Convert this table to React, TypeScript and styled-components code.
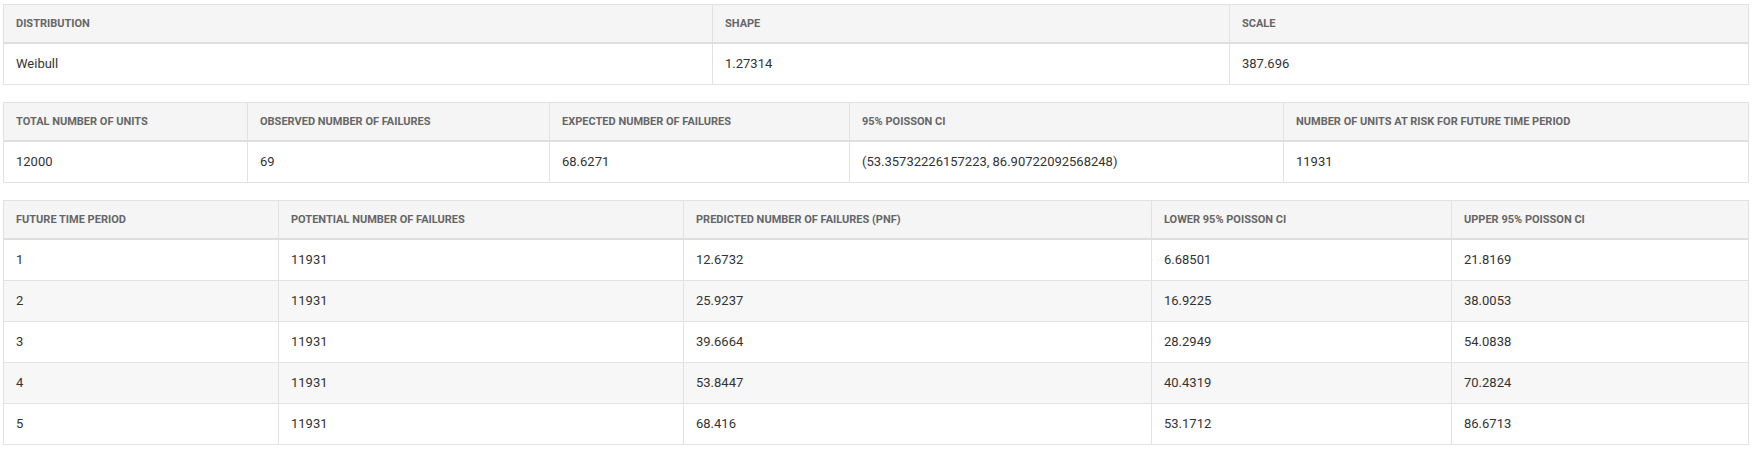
import React, { FC } from 'react';
import styled, { createGlobalStyle } from 'styled-components';

type Column = { title: string; width: number };
type TableProps = { columns: Column[]; rows: (string | number)[][] };

const GlobalStyle = createGlobalStyle`
  html, body {
    margin: 0;
    padding: 0;
    background: #fff;
  }
  body {
    font-family: Roboto, "Liberation Sans", Arial, sans-serif;
  }
`;

const distribution: TableProps = {
  columns: [
    { title: 'Distribution', width: 709 },
    { title: 'Shape', width: 517 },
    { title: 'Scale', width: 519 },
  ],
  rows: [['Weibull', '1.27314', '387.696']],
};

const summary: TableProps = {
  columns: [
    { title: 'Total number of units', width: 244 },
    { title: 'Observed number of failures', width: 302 },
    { title: 'Expected number of failures', width: 300 },
    { title: '95% Poisson CI', width: 434 },
    { title: 'Number of units at risk for future time period', width: 465 },
  ],
  rows: [['12000', '69', '68.6271', '(53.35732226157223, 86.90722092568248)', '11931']],
};

const forecast: TableProps = {
  columns: [
    { title: 'Future time period', width: 275 },
    { title: 'Potential number of failures', width: 405 },
    { title: 'Predicted number of failures (PNF)', width: 468 },
    { title: 'Lower 95% Poisson CI', width: 300 },
    { title: 'Upper 95% Poisson CI', width: 297 },
  ],
  rows: [
    [1, 11931, '12.6732', '6.68501', '21.8169'],
    [2, 11931, '25.9237', '16.9225', '38.0053'],
    [3, 11931, '39.6664', '28.2949', '54.0838'],
    [4, 11931, '53.8447', '40.4319', '70.2824'],
    [5, 11931, '68.416', '53.1712', '86.6713'],
  ],
};

const DataTable: FC<TableProps> = ({ columns, rows }) => (
  <Table>
    <colgroup>
      {columns.map((c) => (
        <col key={c.title} style={{ width: c.width }} />
      ))}
    </colgroup>
    <thead>
      <tr>
        {columns.map((c) => (
          <Th key={c.title}>{c.title}</Th>
        ))}
      </tr>
    </thead>
    <tbody>
      {rows.map((row, i) => (
        <Row key={i} striped={i % 2 === 1}>
          {row.map((cell, j) => (
            <Td key={j}>{cell}</Td>
          ))}
        </Row>
      ))}
    </tbody>
  </Table>
);

const App: FC = () => (
  <>
    <GlobalStyle />
    <Page>
      <DataTable {...distribution} />
      <DataTable {...summary} />
      <DataTable {...forecast} />
    </Page>
  </>
);

const Page = styled.div`
  display: flex;
  flex-direction: column;
  gap: 17px;
  width: 1745px;
  padding: 4px 0 0 3px;
`;

const Table = styled.table`
  width: 100%;
  table-layout: fixed;
  border-collapse: collapse;
  border: 1px solid #e2e2e2;
`;

const Th = styled.th`
  padding: 12px 12px 11px;
  height: 38px;
  box-sizing: border-box;
  text-align: left;
  vertical-align: middle;
  background: #f5f5f5;
  border: 1px solid #e2e2e2;
  border-bottom: 2px solid #dedede;
  font-size: 11px;
  font-weight: 700;
  line-height: 14px;
  text-transform: uppercase;
  color: #666;
`;

const Row = styled.tr<{ striped: boolean }>`
  background: ${(p) => (p.striped ? '#f7f7f7' : '#fff')};
`;

const Td = styled.td`
  padding: 11px 12px;
  height: 41px;
  box-sizing: border-box;
  text-align: left;
  vertical-align: middle;
  border: 1px solid #e2e2e2;
  font-size: 13px;
  line-height: 18px;
  color: #333;
`;

export default App;
